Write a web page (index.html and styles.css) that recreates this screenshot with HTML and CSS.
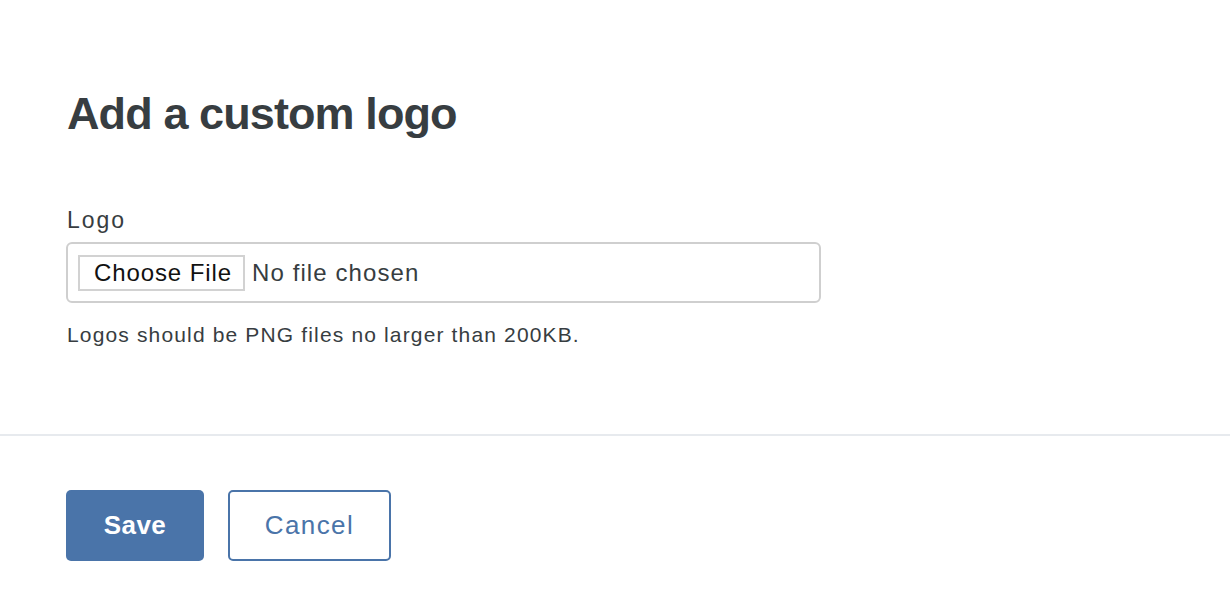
FILE: index.html
```html
<!DOCTYPE html>
<html>
<head>
<meta charset="utf-8">
<link rel="stylesheet" href="styles.css">
</head>
<body>
<main class="page">
  <section class="content">
    <h1 class="title">Add a custom logo</h1>
    <div class="field">
      <label class="label">Logo</label>
      <div class="file-box">
        <span class="file-btn">Choose File</span>
        <span class="file-text">No file chosen</span>
      </div>
      <p class="help">Logos should be PNG files no larger than 200KB.</p>
    </div>
  </section>
  <hr class="divider">
  <div class="actions">
    <button class="btn btn-primary">Save</button>
    <button class="btn btn-secondary">Cancel</button>
  </div>
</main>
</body>
</html>
```
FILE: styles.css
```css
html, body {
  margin: 0;
  padding: 0;
  background: #fff;
}
body {
  font-family: "Liberation Sans", Arial, sans-serif;
  color: #373d41;
}
.content {
  padding: 88px 0 0 67px;
}
.title {
  margin: 0;
  font-size: 45px;
  line-height: 52px;
  font-weight: 700;
  letter-spacing: -0.9px;
  color: #373d41;
}
.field {
  margin-top: 66px;
  padding-bottom: 87px;
}
.label {
  display: block;
  font-size: 23px;
  line-height: 28px;
  letter-spacing: 2px;
  color: #373d41;
}
.file-box {
  margin-top: 8px;
  margin-left: -1px;
  width: 755px;
  height: 61px;
  box-sizing: border-box;
  border: 2px solid #cfcfcf;
  border-radius: 6px;
  display: flex;
  align-items: center;
  padding-left: 10px;
}
.file-btn {
  box-sizing: border-box;
  width: 167px;
  height: 36px;
  padding: 0 0 0 14px;
  border: 2px solid #d2d2d2;
  background: #fff;
  color: #111;
  font-size: 24px;
  letter-spacing: 0.9px;
  display: flex;
  align-items: center;
}
.file-text {
  margin-left: 7px;
  font-size: 24px;
  letter-spacing: 1.1px;
  color: #373d41;
}
.help {
  margin: 20px 0 0;
  font-size: 21px;
  line-height: 24px;
  letter-spacing: 1.15px;
  color: #373d41;
}
.divider {
  margin: 0;
  border: 0;
  height: 2px;
  background: #e7eaee;
}
.actions {
  padding: 54px 0 0 66px;
  display: flex;
  gap: 24px;
}
.btn {
  font-family: "Liberation Sans", Arial, sans-serif;
  font-size: 26px;
  height: 71px;
  border-radius: 5px;
  box-sizing: border-box;
  cursor: pointer;
  padding: 0;
}
.btn-primary {
  width: 138px;
  background: #4a74a9;
  border: 0;
  color: #fff;
  font-weight: 700;
  letter-spacing: 0.4px;
}
.btn-secondary {
  width: 163px;
  background: #fff;
  border: 2px solid #4a74a9;
  color: #4a74a9;
  letter-spacing: 1.4px;
}
```
